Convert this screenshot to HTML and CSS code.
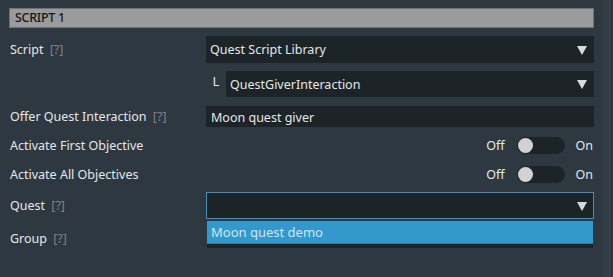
FILE: index.html
```html
<!DOCTYPE html>
<html lang="en">
<head>
    <meta charset="UTF-8">
    <title>Script Properties</title>
    <link rel="stylesheet" href="styles.css">
</head>
<body>

<div class="panel">
    <div class="section-header">SCRIPT 1</div>

    <div class="row row-script">
        <div class="label">Script <span class="help">[?]</span></div>
        <div class="control">
            <div class="dropdown">Quest Script Library <span class="arrow"></span></div>
        </div>
    </div>

    <div class="row row-sub">
        <div class="label"></div>
        <div class="control sub">
            <span class="branch">L</span>
            <div class="dropdown">QuestGiverInteraction <span class="arrow"></span></div>
        </div>
    </div>

    <div class="row row-offer">
        <div class="label">Offer Quest Interaction <span class="help">[?]</span></div>
        <div class="control">
            <div class="text-field">Moon quest giver</div>
        </div>
    </div>

    <div class="row row-toggle first">
        <div class="label">Activate First Objective</div>
        <div class="control toggle-wrap">
            <span class="toggle-text">Off</span>
            <span class="toggle"><span class="knob"></span></span>
            <span class="toggle-text">On</span>
        </div>
    </div>

    <div class="row row-toggle">
        <div class="label">Activate All Objectives</div>
        <div class="control toggle-wrap">
            <span class="toggle-text">Off</span>
            <span class="toggle"><span class="knob"></span></span>
            <span class="toggle-text">On</span>
        </div>
    </div>

    <div class="row row-quest">
        <div class="label">Quest <span class="help">[?]</span></div>
        <div class="control">
            <div class="dropdown open"><span class="arrow"></span></div>
            <div class="dropdown-menu">
                <div class="option selected">Moon quest demo</div>
            </div>
        </div>
    </div>

    <div class="row row-group">
        <div class="label">Group <span class="help">[?]</span></div>
        <div class="control"></div>
    </div>
</div>

<div class="scrollbar"></div>

</body>
</html>
```

FILE: styles.css
```css
body {
    margin: 0;
    background-color: #2e3840;
    font-family: "Noto Sans", "Open Sans", sans-serif;
    font-size: 12.5px;
    color: #e3e7ea;
    display: flex;
    height: 277px;
    overflow: hidden;
}
.panel {
    width: 585px;
    margin-left: 9px;
    padding-top: 8px;
}
.scrollbar {
    margin-left: 9px;
    width: 6px;
    background-color: #323d45;
    border-right: 1px solid #3a454d;
}
.section-header {
    height: 20px;
    box-sizing: border-box;
    background-color: #9b9b9b;
    border: 1px solid #6e7377;
    color: #161616;
    font-size: 12.5px;
    font-weight: 500;
    letter-spacing: -0.3px;
    line-height: 18px;
    padding-left: 5px;
}
.row {
    display: flex;
    align-items: center;
}
.label {
    width: 196px;
    flex-shrink: 0;
    padding-left: 1px;
    white-space: nowrap;
}
.help {
    color: #7c8388;
    margin-left: 3px;
}
.control {
    flex: 1;
    display: flex;
    align-items: center;
    height: 100%;
    position: relative;
}
.row-script { height: 27px; margin-top: 8px; }
.row-sub { height: 26px; margin-top: 8px; }
.row-offer { height: 21px; margin-top: 9px; }
.row-toggle { height: 17px; margin-top: 10px; }
.row-toggle + .row-toggle { margin-top: 12px; }
.row-quest { height: 27px; margin-top: 9px; }
.row-group { height: 20px; margin-top: 9px; }

.dropdown {
    flex: 1;
    height: 100%;
    box-sizing: border-box;
    background-color: #1d2428;
    padding-left: 4px;
    display: flex;
    align-items: center;
    position: relative;
}
.dropdown.open {
    border: 1px solid #3d8fbe;
}
.arrow {
    position: absolute;
    right: 7px;
    top: 50%;
    margin-top: -4px;
    width: 0;
    height: 0;
    border-left: 5px solid transparent;
    border-right: 5px solid transparent;
    border-top: 9px solid #d6dbde;
}
.dropdown.open .arrow {
    right: 6px;
}
.sub .branch {
    width: 20px;
    text-align: center;
    align-self: flex-start;
    margin-top: 1px;
    font-size: 13px;
}
.text-field {
    flex: 1;
    height: 100%;
    box-sizing: border-box;
    background-color: #1d2428;
    padding-left: 5px;
    display: flex;
    align-items: center;
    padding-top: 1px;
}
.toggle-wrap {
    justify-content: flex-end;
}
.toggle {
    width: 48px;
    height: 17px;
    border-radius: 9px;
    background-color: #1d2428;
    margin: 0 11px 0 12px;
    position: relative;
}
.knob {
    position: absolute;
    left: 1px;
    top: 1px;
    width: 15px;
    height: 15px;
    border-radius: 50%;
    background-color: #d2d2d2;
}
.toggle-text:last-child {
    margin-right: 1px;
}
.dropdown-menu {
    position: absolute;
    left: 1px;
    right: 1px;
    top: 29px;
    background-color: #1d2428;
    padding-bottom: 4px;
    z-index: 2;
}
.option {
    height: 23px;
    box-sizing: border-box;
    padding-left: 4px;
    display: flex;
    align-items: center;
    color: #d4e4ef;
    font-size: 13px;
}
.option.selected {
    background-color: #3398cc;
    border-bottom: 1px solid #2a7eaa;
}
```
